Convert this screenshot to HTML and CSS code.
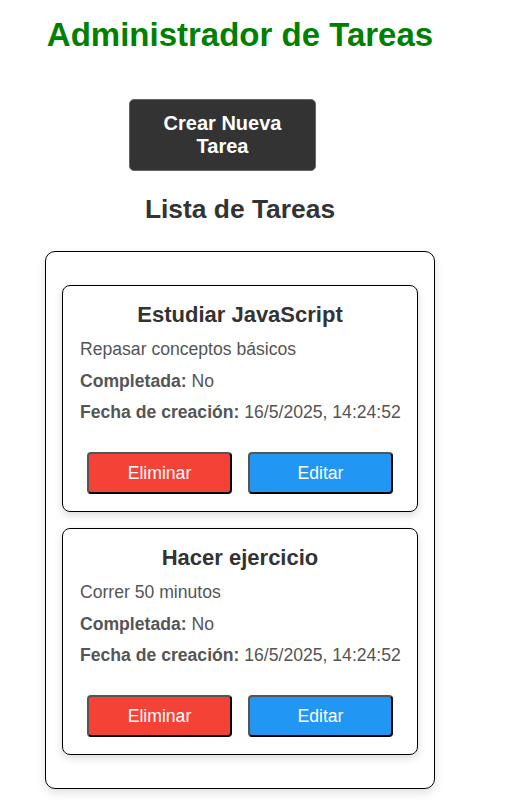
FILE: index.html
```html
<!DOCTYPE html>
<html lang="es">
<head>
<meta charset="utf-8">
<title>Administrador de Tareas</title>
<link rel="stylesheet" href="styles.css">
</head>
<body>
<div class="app">
  <h1 class="title">Administrador de Tareas</h1>
  <div class="create-row">
    <button class="create-btn">Crear Nueva Tarea</button>
  </div>
  <h2 class="list-title">Lista de Tareas</h2>
  <div class="task-list">
    <div class="task-card">
      <h3 class="task-name">Estudiar JavaScript</h3>
      <p class="task-line">Repasar conceptos básicos</p>
      <p class="task-line"><strong>Completada:</strong> No</p>
      <p class="task-line"><strong>Fecha de creación:</strong> 16/5/2025, 14:24:52</p>
      <div class="task-actions">
        <button class="btn btn-delete">Eliminar</button>
        <button class="btn btn-edit">Editar</button>
      </div>
    </div>
    <div class="task-card">
      <h3 class="task-name">Hacer ejercicio</h3>
      <p class="task-line">Correr 50 minutos</p>
      <p class="task-line"><strong>Completada:</strong> No</p>
      <p class="task-line"><strong>Fecha de creación:</strong> 16/5/2025, 14:24:52</p>
      <div class="task-actions">
        <button class="btn btn-delete">Eliminar</button>
        <button class="btn btn-edit">Editar</button>
      </div>
    </div>
  </div>
</div>
</body>
</html>
```
FILE: styles.css
```css
html, body {
  margin: 0;
  padding: 0;
  background: #fff;
}
body {
  font-family: "Liberation Sans", Arial, sans-serif;
}
.app {
  width: 480px;
  padding-top: 16px;
  padding-bottom: 20px;
}
.title {
  margin: 0;
  font-size: 33px;
  line-height: 38px;
  font-weight: bold;
  color: #008000;
  text-align: center;
}
.create-row {
  margin-top: 45px;
  padding-left: 129px;
}
.create-btn {
  display: block;
  width: 187px;
  height: 72px;
  box-sizing: border-box;
  padding: 0 24px;
  background: #333;
  color: #fff;
  border: 1px solid #666;
  border-radius: 5px;
  font-family: "Liberation Sans", Arial, sans-serif;
  font-size: 20px;
  font-weight: bold;
  line-height: 23px;
}
.list-title {
  margin: 23px 0 0;
  font-size: 26.4px;
  line-height: 30px;
  font-weight: bold;
  color: #333;
  text-align: center;
}
.task-list {
  margin: 27px 0 0 45px;
  width: 390px;
  box-sizing: border-box;
  border: 1px solid #000;
  border-radius: 10px;
  padding: 1px 16px;
  box-shadow: 0 4px 10px rgba(0, 0, 0, 0.12);
}
.task-card {
  margin: 32px 0 32px;
  border: 1px solid #000;
  border-radius: 8px;
  padding: 16px 17px 17px;
  box-shadow: 0 3px 8px rgba(0, 0, 0, 0.15);
}
.task-card + .task-card {
  margin-top: -16px;
}
.task-name {
  margin: 0;
  font-size: 22px;
  line-height: 25px;
  font-weight: bold;
  color: #333;
  text-align: center;
}
.task-line {
  margin: 12px 0 0;
  font-size: 17.6px;
  line-height: 20px;
  color: #555;
  white-space: nowrap;
}
.task-line + .task-line {
  margin-top: 11.5px;
}
.task-actions {
  display: flex;
  justify-content: center;
  gap: 16px;
  margin-top: 30px;
}
.btn {
  width: 145px;
  height: 42px;
  box-sizing: border-box;
  border: 2px outset #555;
  border-right-color: #111;
  border-bottom-color: #111;
  border-radius: 4px;
  color: #fff;
  font-family: "Liberation Sans", Arial, sans-serif;
  font-size: 17.6px;
  line-height: 20px;
  padding: 0;
}
.btn-delete {
  background: #f44336;
}
.btn-edit {
  background: #2196f3;
}
```
